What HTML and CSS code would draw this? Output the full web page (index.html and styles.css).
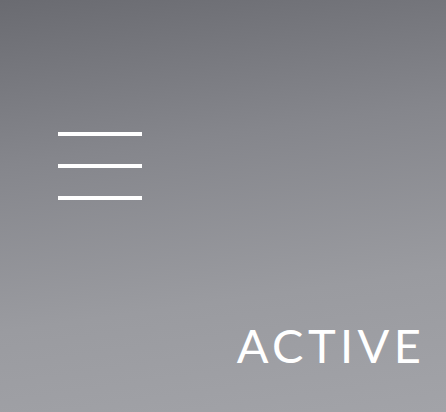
FILE: index.html
```html
<!DOCTYPE html>
<html>
<head>
<meta charset="utf-8">
<link rel="stylesheet" href="styles.css">
</head>
<body>
<div class="screen">
  <div class="menu">
    <span class="bar"></span>
    <span class="bar"></span>
    <span class="bar"></span>
  </div>
  <div class="label">ACTIVE</div>
</div>
</body>
</html>
```
FILE: styles.css
```css
html, body {
  margin: 0;
  padding: 0;
}
.screen {
  width: 446px;
  height: 412px;
  box-sizing: border-box;
  background: linear-gradient(172deg, #6a6b71 0%, #85868c 35%, #9a9ba0 70%, #a2a3a8 100%);
  display: flex;
  flex-direction: column;
  padding: 132px 25px 0 58px;
  font-family: Lato, "Noto Sans", sans-serif;
}
.menu {
  display: flex;
  flex-direction: column;
  gap: 28px;
  width: 84px;
}
.bar {
  display: block;
  height: 4px;
  background: #ffffff;
}
.label {
  margin-top: 122px;
  align-self: flex-end;
  color: #ffffff;
  font-size: 47px;
  font-weight: 400;
  letter-spacing: 4.4px;
  line-height: 47px;
  margin-right: -4.4px;
}
```
